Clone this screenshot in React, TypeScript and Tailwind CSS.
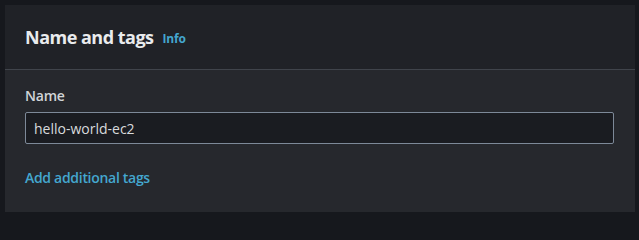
import React from 'react';

export default function App() {
  return (
    <div
      className="w-[639px] min-h-screen bg-[#16181d] pt-[5px] pl-[5px]"
      style={{ fontFamily: '"Open Sans", "Noto Sans", Arial, sans-serif' }}
    >
      <section className="w-[630px] h-[207px] bg-[#26282d] flex flex-col">
        <header className="h-[65px] px-[20px] flex items-center gap-[9px] bg-[#202227] border-b border-[#40444b]">
          <h2 className="text-[18px] font-bold text-[#e9ebed] tracking-[-0.5px]">Name and tags</h2>
          <a className="text-[12px] font-bold text-[#44a7cf] mt-[3px] tracking-[-0.2px]">Info</a>
        </header>
        <div className="px-[20px] pt-[15px]">
          <label className="block text-[14px] leading-[22px] font-semibold text-[#d1d5d8] tracking-[-0.2px]">
            Name
          </label>
          <div className="mt-[5px] w-[589px] h-[32px] rounded-[2px] border border-[#7d8998] bg-[#1a1c21] flex items-center px-[8px]">
            <span className="text-[14px] text-[#d8dadd]">hello-world-ec2</span>
          </div>
          <a className="block mt-[23px] text-[14px] leading-[22px] font-semibold text-[#44a7cf] tracking-[-0.3px]">
            Add additional tags
          </a>
        </div>
      </section>
    </div>
  );
}
